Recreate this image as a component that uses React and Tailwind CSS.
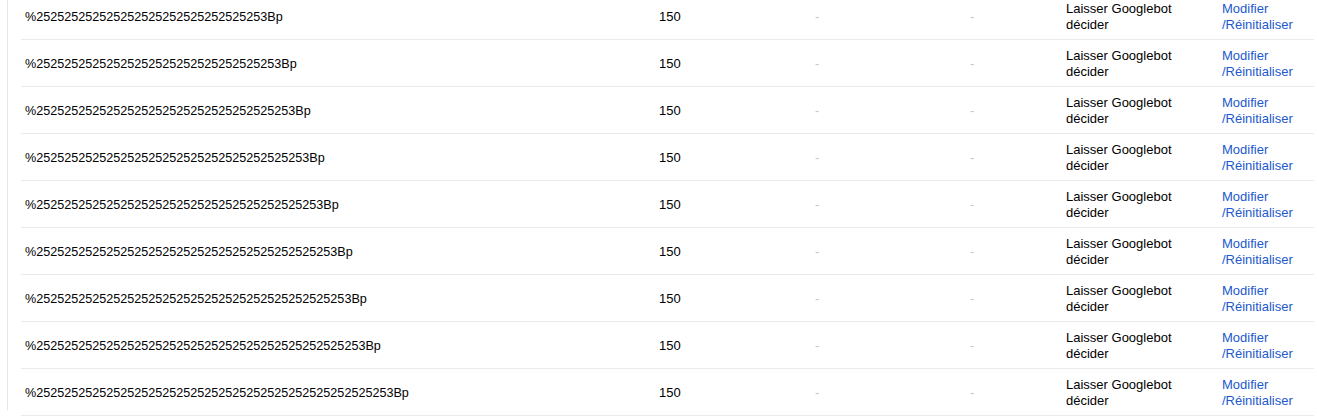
import React from 'react';

const rows = [16, 17, 18, 19, 20, 21, 22, 23, 25].map((n) => '%' + '25'.repeat(n) + '3Bp');

export default function App() {
  return (
    <div className="w-[1317px] h-[417px] overflow-hidden bg-white font-['Liberation_Sans',Arial,sans-serif] text-[13px] text-black">
      <div className="ml-[7px] h-full border-l border-[#e6e6e6] pl-[13px]">
        <div className="-mt-[7px] w-[1293px]">
          {rows.map((url, i) => (
            <Row key={i} url={url} />
          ))}
        </div>
      </div>
    </div>
  );
}

function Row({ url }) {
  return (
    <div className="grid h-[47px] grid-cols-[634px_156px_155px_96px_156px_96px] items-center border-b border-[#ebebeb] pt-[2px] leading-[16px]">
      <div className="pl-[4px] whitespace-nowrap text-[12.6px]">{url}</div>
      <div className="pl-[4px]">150</div>
      <div className="pl-[4px] text-[#c8c8c8]">-</div>
      <div className="pl-[4px] text-[#c8c8c8]">-</div>
      <div className="pl-[4px]">
        Laisser Googlebot
        <br />
        décider
      </div>
      <div className="pl-[4px] text-[#2259cc]">
        <a href="#">Modifier</a>
        <br />
        <a href="#">/Réinitialiser</a>
      </div>
    </div>
  );
}
